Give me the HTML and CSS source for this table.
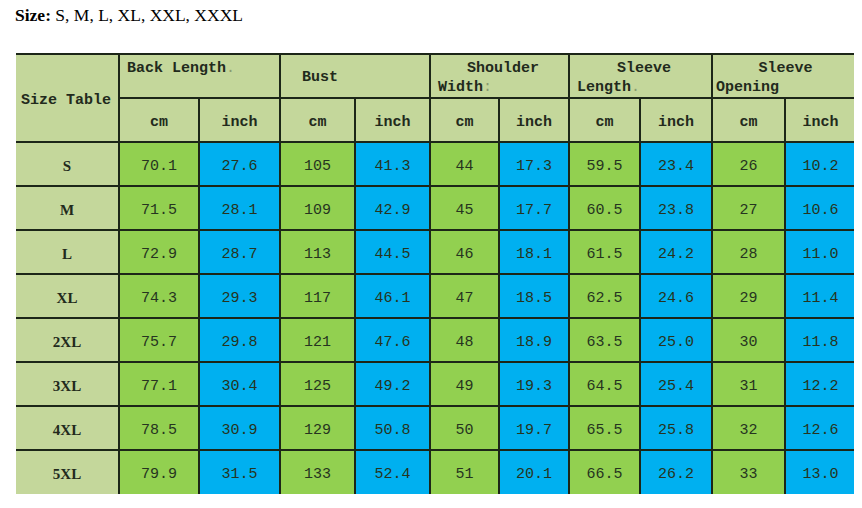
FILE: index.html
```html
<!DOCTYPE html>
<html>
<head>
<meta charset="utf-8">
<link rel="stylesheet" href="styles.css">
</head>
<body>
<p class="sizes"><b>Size:</b> S, M, L, XL, XXL, XXXL</p>
<table class="chart">
  <colgroup>
    <col class="c0"><col class="c1"><col class="c2"><col class="c3"><col class="c4"><col class="c5"><col class="c6"><col class="c7"><col class="c8"><col class="c9"><col class="c10">
  </colgroup>
  <thead>
    <tr class="h1">
      <th rowspan="2" class="corner">Size Table</th>
      <th colspan="2" class="top">Back Length<span class="dot">.</span></th>
      <th colspan="2" class="mid">Bust</th>
      <th colspan="2" class="two"><span class="l1">Shoulder</span><span class="l2">Width<span class="dot">:</span></span></th>
      <th colspan="2" class="two"><span class="l1">Sleeve</span><span class="l2">Length<span class="dot">.</span></span></th>
      <th colspan="2" class="two tight"><span class="l1">Sleeve</span><span class="l2">Opening</span></th>
    </tr>
    <tr class="h2">
      <th>cm</th><th>inch</th><th>cm</th><th>inch</th><th>cm</th><th>inch</th><th>cm</th><th>inch</th><th>cm</th><th>inch</th>
    </tr>
  </thead>
  <tbody>
    <tr><th>S</th><td class="g">70.1</td><td class="b">27.6</td><td class="g">105</td><td class="b">41.3</td><td class="g">44</td><td class="b">17.3</td><td class="g">59.5</td><td class="b">23.4</td><td class="g">26</td><td class="b">10.2</td></tr>
    <tr><th>M</th><td class="g">71.5</td><td class="b">28.1</td><td class="g">109</td><td class="b">42.9</td><td class="g">45</td><td class="b">17.7</td><td class="g">60.5</td><td class="b">23.8</td><td class="g">27</td><td class="b">10.6</td></tr>
    <tr><th>L</th><td class="g">72.9</td><td class="b">28.7</td><td class="g">113</td><td class="b">44.5</td><td class="g">46</td><td class="b">18.1</td><td class="g">61.5</td><td class="b">24.2</td><td class="g">28</td><td class="b">11.0</td></tr>
    <tr><th>XL</th><td class="g">74.3</td><td class="b">29.3</td><td class="g">117</td><td class="b">46.1</td><td class="g">47</td><td class="b">18.5</td><td class="g">62.5</td><td class="b">24.6</td><td class="g">29</td><td class="b">11.4</td></tr>
    <tr><th>2XL</th><td class="g">75.7</td><td class="b">29.8</td><td class="g">121</td><td class="b">47.6</td><td class="g">48</td><td class="b">18.9</td><td class="g">63.5</td><td class="b">25.0</td><td class="g">30</td><td class="b">11.8</td></tr>
    <tr><th>3XL</th><td class="g">77.1</td><td class="b">30.4</td><td class="g">125</td><td class="b">49.2</td><td class="g">49</td><td class="b">19.3</td><td class="g">64.5</td><td class="b">25.4</td><td class="g">31</td><td class="b">12.2</td></tr>
    <tr><th>4XL</th><td class="g">78.5</td><td class="b">30.9</td><td class="g">129</td><td class="b">50.8</td><td class="g">50</td><td class="b">19.7</td><td class="g">65.5</td><td class="b">25.8</td><td class="g">32</td><td class="b">12.6</td></tr>
    <tr><th>5XL</th><td class="g">79.9</td><td class="b">31.5</td><td class="g">133</td><td class="b">52.4</td><td class="g">51</td><td class="b">20.1</td><td class="g">66.5</td><td class="b">26.2</td><td class="g">33</td><td class="b">13.0</td></tr>
  </tbody>
</table>
</body>
</html>
```
FILE: styles.css
```css
body {
  margin: 8px;
  background: #ffffff;
  font-family: "Liberation Serif", "Times New Roman", serif;
  color: #000;
}
.sizes {
  margin: 0 0 0 7px;
  font-size: 17.5px;
  line-height: 14px;
}
.chart {
  margin: 31px 0 0 8px;
  width: 839px;
  table-layout: fixed;
  border-collapse: collapse;
  font-family: "Liberation Mono", "Courier New", monospace;
  color: #1e2a1e;
}
.c0 { width: 103px; }
.c1 { width: 80px; }
.c2 { width: 81px; }
.c3 { width: 75px; }
.c4 { width: 75px; }
.c5 { width: 69px; }
.c6 { width: 70px; }
.c7 { width: 71px; }
.c8 { width: 72px; }
.c9 { width: 73px; }
.c10 { width: 70px; }
.chart th, .chart td {
  border: 2px solid #1c2618;
  padding: 4px 0 0;
  text-align: center;
  vertical-align: middle;
}
.chart tr > :first-child { border-left: none; }
.chart tr > :last-child { border-right: none; }
.chart tbody tr:last-child > * { border-bottom: none; }
.chart thead th {
  background: #c4d79b;
  font-size: 15px;
  font-weight: bold;
  color: #222a1c;
}
.h1 th { height: 37px; }
.h2 th { height: 38px; }
.chart tbody tr { height: 44px; }
.chart thead .corner {
  text-align: left;
  padding-left: 5px;
  border-left: none;
}
.chart thead .h1 th:last-child { border-right: none; }
.chart thead .h2 th:last-child { border-right: none; }
.top {
  text-align: left !important;
  vertical-align: top !important;
  padding: 5px 0 0 7px !important;
}
.mid {
  text-align: left !important;
  padding: 3px 0 0 21px !important;
}
.two {
  vertical-align: top !important;
  padding: 4px 0 0 7px !important;
  line-height: 19px;
}
.two.tight { padding-left: 3px !important; }
.two .l1 { display: block; text-align: center; }
.two .l2 { display: block; text-align: left; }
.dot { color: #8a9a70; font-weight: normal; }
.chart tbody th {
  background: #c4d79b;
  font-family: "Liberation Serif", "Times New Roman", serif;
  font-weight: bold;
  font-size: 15px;
  color: #222a1c;
}
.chart td {
  font-size: 15px;
  color: #263420;
}
.g { background: #92d050; }
.b { background: #00b0f0; }
```
